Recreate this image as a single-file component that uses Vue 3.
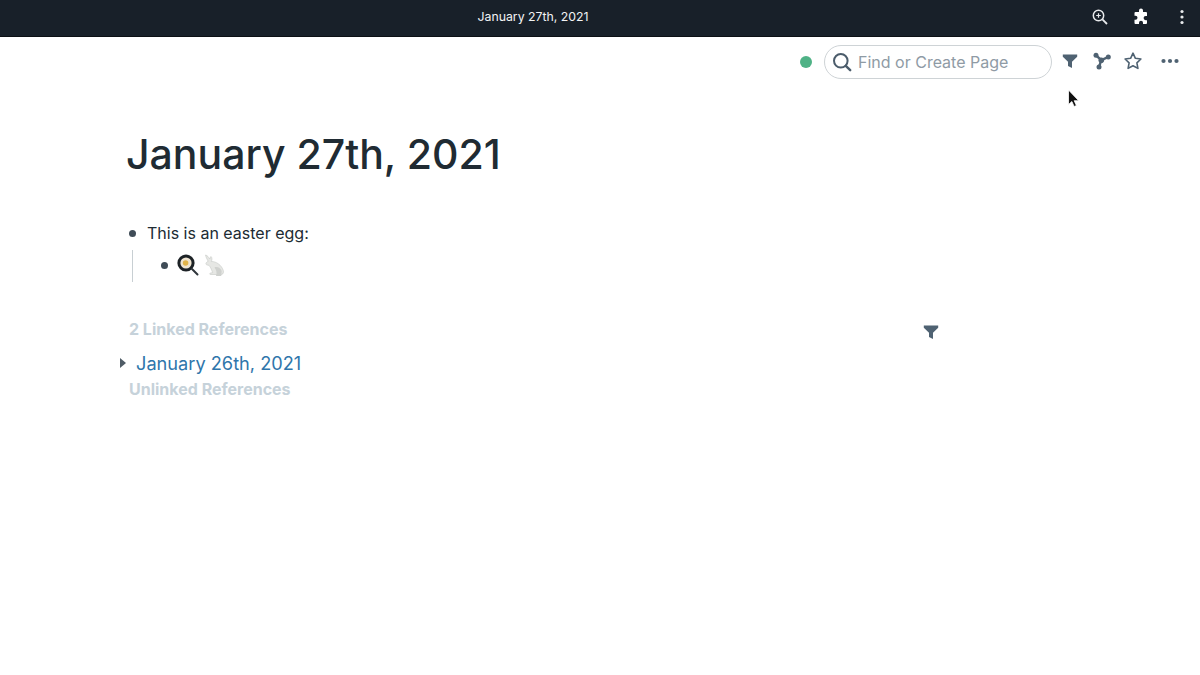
<script setup>
const title = 'January 27th, 2021'
</script>

<template>
  <div class="app">
    <header class="titlebar">
      <div class="titlebar__title">{{ title }}</div>
      <div class="titlebar__icons">
        <svg viewBox="0 0 18 18" width="18" height="18">
          <circle cx="7.500" cy="7.500" r="5.200" fill="none" stroke="#e8eaec" stroke-width="1.500" />
          <path d="M11.400 11.400 16 16" stroke="#e8eaec" stroke-width="1.800" />
          <path d="M7.500 5.200v4.600M5.200 7.500h4.600" stroke="#e8eaec" stroke-width="1.200" />
        </svg>
        <svg viewBox="0 0 18 18" width="18" height="18">
          <path fill="#fff" d="M7 2.500a2 2 0 0 1 4 0V4h3a1 1 0 0 1 1 1v3h-1.300a2.100 2.100 0 0 0 0 4.200H15V15a1 1 0 0 1-1 1h-3v-1.200a2 2 0 0 0-4 0V16H3.500a1 1 0 0 1-1-1v-3.200h1a2 2 0 0 0 0-4h-1V5a1 1 0 0 1 1-1H7z" />
        </svg>
        <svg viewBox="0 0 18 18" width="18" height="18">
          <circle cx="9" cy="3.500" r="1.600" fill="#e8eaec" />
          <circle cx="9" cy="9" r="1.600" fill="#e8eaec" />
          <circle cx="9" cy="14.500" r="1.600" fill="#e8eaec" />
        </svg>
      </div>
    </header>

    <div class="toolbar">
      <span class="status-dot"></span>
      <div class="search">
        <svg viewBox="0 0 20 20" width="20" height="20">
          <circle cx="8.800" cy="8.800" r="6.800" fill="none" stroke="#4b5c6b" stroke-width="2" />
          <path d="M13.800 13.800 18.200 18.200" stroke="#4b5c6b" stroke-width="2.400" stroke-linecap="round" />
        </svg>
        <span class="search__placeholder">Find or Create Page</span>
      </div>
      <div class="toolbar__icons">
        <svg viewBox="0 0 16 16" width="16" height="16">
          <path fill="#4f6272" d="M.8 1.500h14.400v2.200L10 8.800v6.200l-4-2V8.800L.8 3.700z" />
        </svg>
        <svg class="graph-icon" viewBox="0 0 18 18" width="18" height="18">
          <path d="M3.200 3.500 8.300 8.200 15 5.200M8.300 8.200 6.200 14.500" fill="none" stroke="#4f6272" stroke-width="2.400" />
          <circle cx="3" cy="3.300" r="2.500" fill="#4f6272" />
          <circle cx="15.300" cy="5" r="2.500" fill="#4f6272" />
          <circle cx="6" cy="15" r="2.500" fill="#4f6272" />
          <circle cx="8.300" cy="8.200" r="2.800" fill="#4f6272" />
        </svg>
        <svg class="star-icon" viewBox="0 0 18 18" width="18" height="18">
          <path fill="none" stroke="#4f6272" stroke-width="1.600" stroke-linejoin="round" d="M9 1.200l2.400 5.100 5.500.7-4 3.800 1 5.600L9 13.700 4.100 16.400l1-5.600-4-3.800 5.500-.7z" />
        </svg>
        <svg class="more-icon" viewBox="0 0 18 6" width="18" height="6">
          <circle cx="2.500" cy="3" r="2.100" fill="#4f6272" />
          <circle cx="9" cy="3" r="2.100" fill="#4f6272" />
          <circle cx="15.500" cy="3" r="2.100" fill="#4f6272" />
        </svg>
      </div>
    </div>

    <main class="page">
      <h1 class="page__title">{{ title }}</h1>

      <div class="block">
        <span class="bullet"></span>
        <span class="block__text">This is an easter egg:</span>
      </div>
      <div class="children">
        <div class="block block--child">
          <span class="bullet"></span>
          <svg class="emoji" viewBox="0 0 22 22" width="22" height="22">
            <circle cx="9" cy="9" r="8.600" fill="#1d2226" />
            <circle cx="9" cy="9" r="5.600" fill="#f1e6d2" />
            <circle cx="8.600" cy="9" r="2.800" fill="#e3b54a" />
            <path d="M15 15l5.500 5.500" stroke="#30363b" stroke-width="2" stroke-linecap="round" />
          </svg>
          <svg class="emoji" viewBox="0 0 22 22" width="22" height="22">
            <path fill="#e6e7e4" stroke="#c6c9c6" stroke-width=".6" d="M2.500 1c1.800.4 3.400 2.300 4.200 4l1.200-2.500c1.300.8 1.300 3.400.4 5 4.800-.2 10.300 3.600 12 9 .5 1.700 0 3.500-1.500 4H7.500c-1 0-1.100-1.100-.1-1.400l2.300-.5C8.600 16.200 7.800 13.400 6 11.300c-1.500-.1-3.300-.5-3.100-1.800.2-1.100 1.500-1.900 2.300-2.200C4 5.300 2.800 2.800 2.500 1z" />
            <path fill="#cfd1ce" d="M11.500 13.500c2.800-1.200 6 .5 7.200 3.600l-.5 4.900H13c1.200-3 .4-6.200-1.500-8.500z" />
          </svg>
        </div>
      </div>

      <section class="refs">
        <div class="refs__header">
          <span class="refs__label">2 Linked References</span>
          <svg class="refs__filter" viewBox="0 0 16 16" width="16" height="16">
            <path fill="#4f6272" d="M.8 1.500h14.400v2.200L10 8.800v6.200l-4-2V8.800L.8 3.700z" />
          </svg>
        </div>
        <div class="refs__page">
          <svg class="caret" viewBox="0 0 8 10" width="8" height="10">
            <path fill="#4f5c66" d="M1 0l6 5-6 5z" />
          </svg>
          <span class="refs__link">January 26th, 2021</span>
        </div>
        <div class="refs__label">Unlinked References</div>
      </section>
    </main>

    <svg class="cursor" viewBox="0 0 14 20" width="14" height="20">
      <path fill="#111" stroke="#fff" stroke-width=".8" d="M1.500 1v14.500l3.400-3 2.200 5 2.300-1-2.200-4.800h4.500z" />
    </svg>
  </div>
</template>

<style scoped>
.app {
  position: relative;
  height: 675px;
  overflow: hidden;
  background: #fff;
  font-family: Inter, "Liberation Sans", sans-serif;
  color: #202b33;
}

.titlebar {
  display: flex;
  align-items: center;
  height: 36px;
  padding-right: 9px;
  background: #182029;
  border-bottom: 1px solid #0c1014;
}

.titlebar__title {
  width: 1066px;
  margin-bottom: 3px;
  color: #f2f3f4;
  font-size: 12.300px;
  text-align: center;
}

.titlebar__icons {
  display: flex;
  align-items: center;
  gap: 23px;
  margin-left: auto;
  margin-bottom: 2px;
}

.toolbar {
  display: flex;
  align-items: center;
  height: 50px;
  padding: 0 20px 0 800px;
}

.status-dot {
  width: 12px;
  height: 12px;
  border-radius: 50%;
  background: #4fb286;
}

.search {
  display: flex;
  align-items: center;
  box-sizing: border-box;
  width: 228px;
  height: 34px;
  margin-left: 12px;
  padding-left: 7px;
  border: 1px solid #ced3d6;
  border-radius: 17px;
  gap: 6px;
}

.search__placeholder {
  color: #8f9ba5;
  font-size: 16px;
}

.toolbar__icons {
  display: flex;
  align-items: center;
  gap: 15px;
  margin: 0 0 2px 10px;
}

.star-icon {
  margin-left: -2px;
}

.more-icon {
  margin-left: 4px;
}

.page {
  padding: 0 0 0 126px;
}

.page__title {
  margin: 39px 0 36px;
  color: #202b33;
  font-size: 41px;
  font-weight: 500;
  line-height: 56px;
}

.block {
  display: flex;
  align-items: center;
  height: 30px;
  padding-left: 1px;
}

.bullet {
  flex: none;
  width: 7px;
  height: 7px;
  margin-left: 2px;
  border-radius: 50%;
  background: #3f4c57;
}

.block__text {
  margin-left: 11px;
  font-size: 16px;
}

.children {
  box-sizing: border-box;
  height: 32px;
  margin: 2px 0 0 6px;
  border-left: 1px solid #c8cfd3;
}

.block--child {
  height: 30px;
  padding-left: 25px;
}

.block--child .bullet {
  margin-left: 3px;
}

.emoji {
  margin-left: 9px;
}

.emoji + .emoji {
  margin-left: 4px;
}

.refs {
  margin-top: 36px;
  padding-left: 1px;
}

.refs__header {
  display: flex;
  align-items: center;
  justify-content: space-between;
  box-sizing: border-box;
  width: 812px;
  height: 22px;
  padding-left: 2px;
}

.refs__filter {
  margin-top: 5px;
}

.refs__label {
  display: block;
  color: #c6d2da;
  font-size: 16px;
  font-weight: 700;
}

.refs__page {
  display: flex;
  align-items: center;
  height: 30px;
  margin: 8px 0 0 -8px;
}

.refs__link {
  margin-left: 9px;
  color: #2f76ab;
  font-size: 18.200px;
}

.refs__page + .refs__label {
  margin: 1px 0 0 2px;
  line-height: 20px;
}

.cursor {
  position: absolute;
  top: 89px;
  left: 1067px;
}
</style>
